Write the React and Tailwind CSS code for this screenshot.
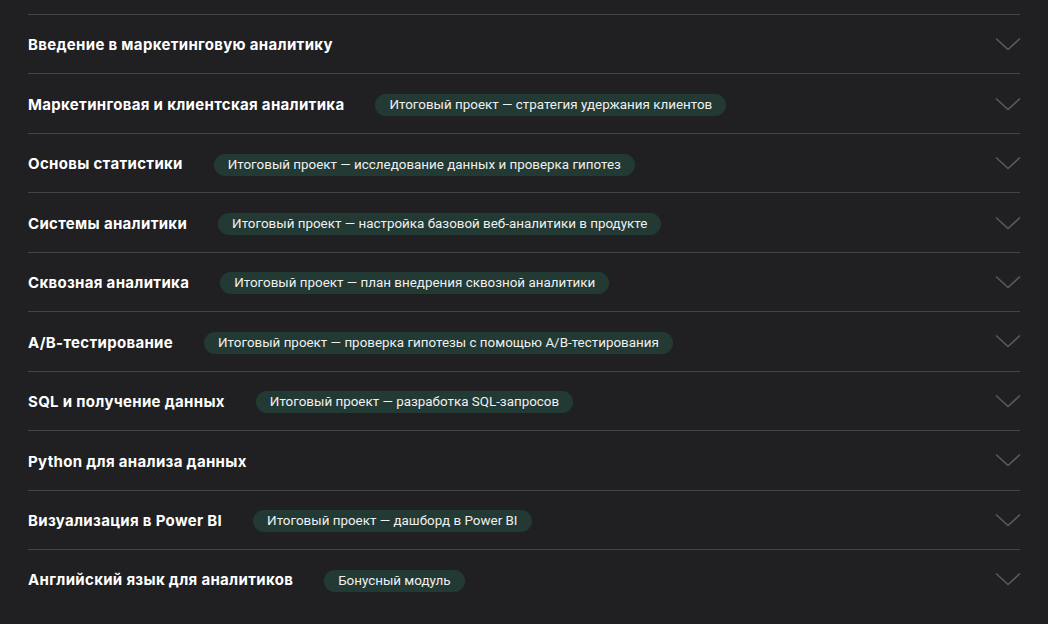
import React from "react";

const modules = [
  { title: "Введение в маркетинговую аналитику" },
  { title: "Маркетинговая и клиентская аналитика", tag: "Итоговый проект — стратегия удержания клиентов" },
  { title: "Основы статистики", tag: "Итоговый проект — исследование данных и проверка гипотез" },
  { title: "Системы аналитики", tag: "Итоговый проект — настройка базовой веб-аналитики в продукте" },
  { title: "Сквозная аналитика", tag: "Итоговый проект — план внедрения сквозной аналитики" },
  { title: "A/B-тестирование", tag: "Итоговый проект — проверка гипотезы с помощью A/B-тестирования" },
  { title: "SQL и получение данных", tag: "Итоговый проект — разработка SQL-запросов" },
  { title: "Python для анализа данных" },
  { title: "Визуализация в Power BI", tag: "Итоговый проект — дашборд в Power BI" },
  { title: "Английский язык для аналитиков", tag: "Бонусный модуль" },
];

const Chevron = () => (
  <svg width="26" height="14" viewBox="0 0 26 14" fill="none">
    <path d="M1 1.5L13 12.5L25 1.5" stroke="#5a5a5d" strokeWidth="1.6" />
  </svg>
);

export default function App() {
  return (
    <div className="min-h-screen w-full bg-[#202022] pt-[14px] px-[28px]" style={{ fontFamily: "Inter, 'Noto Sans', sans-serif" }}>
      {modules.map((m, i) => (
        <div
          key={i}
          className="flex items-center justify-between h-[59.44px] border-t border-[#434346]"
        >
          <div className="flex items-center gap-[31px] pt-[3px]">
            <span className="text-[15px] font-bold text-white tracking-[0.32px]">{m.title}</span>
            {m.tag && (
              <span
                className="h-[22px] flex items-center px-[14px] rounded-full bg-[#233a34] text-[13.4px] text-[#f0f0f0]"
                style={{ fontFamily: "Roboto, sans-serif" }}
              >
                {m.tag}
              </span>
            )}
          </div>
          <div className="-mr-[1px]">
            <Chevron />
          </div>
        </div>
      ))}
    </div>
  );
}
